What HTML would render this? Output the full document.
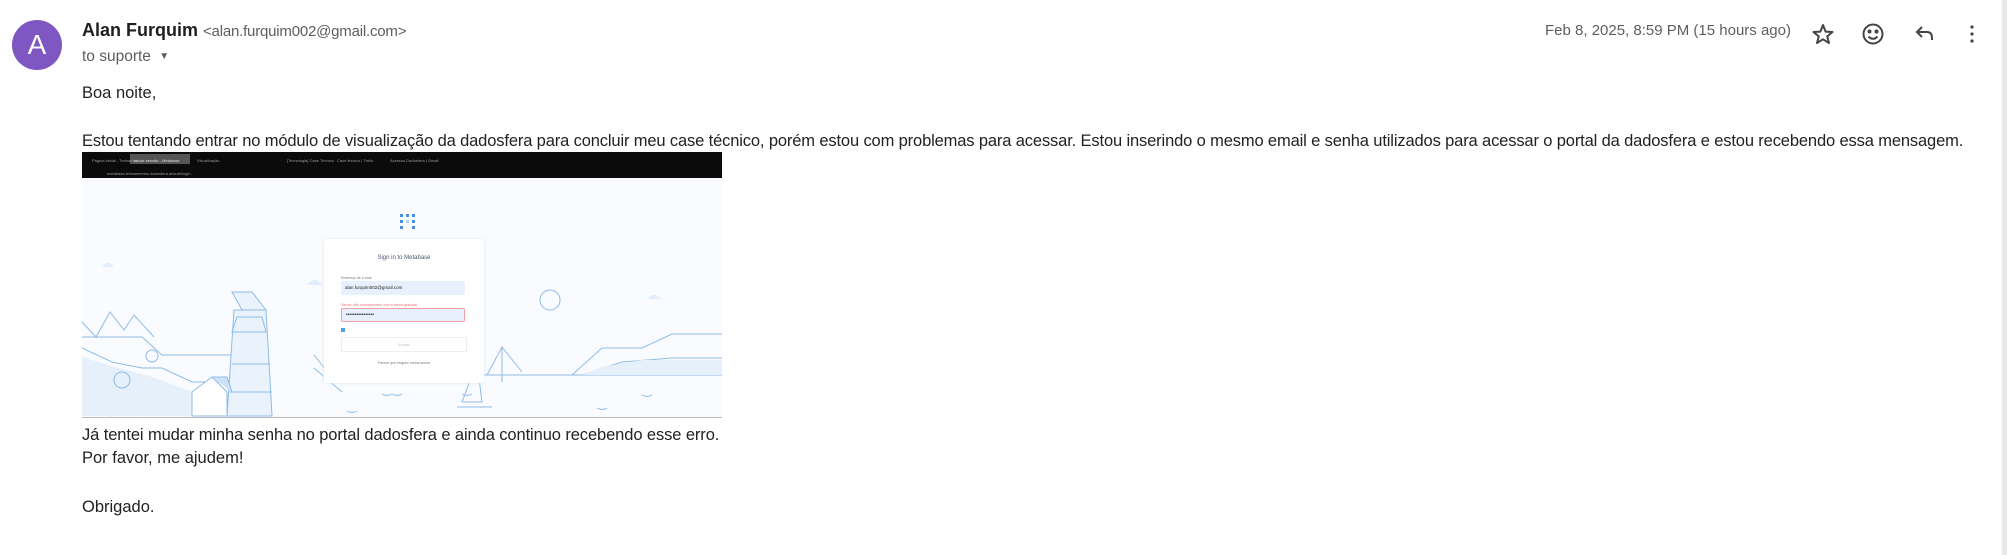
<!DOCTYPE html>
<html><head><meta charset="utf-8"><style>
body{margin:0;width:2007px;height:555px;background:#fff;position:relative;overflow:hidden;font-family:"Liberation Sans",Arial,sans-serif;color:#222}
.a{position:absolute;white-space:nowrap}
.av{left:12px;top:20px;width:50px;height:50px;border-radius:50%;background:#7e57c2;color:#fff;font-size:28px;line-height:50px;text-align:center}
.t{font-size:16.5px;color:#222}
.sb{position:absolute;left:2002px;top:0;width:5px;height:555px;background:#e8e8e8}
</style></head><body>
<div class="a av">A</div>
<div class="a" style="left:82px;top:20px;font-size:18px;font-weight:bold;color:#1f1f1f">Alan Furquim <span style="font-weight:normal;font-size:15px;color:#5e5e5e;letter-spacing:-0.2px">&lt;alan.furquim002@gmail.com&gt;</span></div>
<div class="a" style="left:82px;top:48px;font-size:15.5px;color:#5e5e5e">to suporte <span style="font-size:10px;position:relative;top:-2px;margin-left:4px">▼</span></div>
<div class="a" style="left:1545px;top:22px;font-size:15px;color:#5e5e5e">Feb 8, 2025, 8:59 PM (15 hours ago)</div>
<svg class="a" style="left:1810px;top:20px" width="180" height="30" viewBox="0 0 180 30" fill="none" stroke="#444" stroke-width="2">
<path d="M13 5 L15.6 11.6 L22.5 12 L17.2 16.4 L19 23 L13 19.3 L7 23 L8.8 16.4 L3.5 12 L10.4 11.6 Z" stroke-linejoin="round"/>
<circle cx="63" cy="14" r="9.5"/><circle cx="59.5" cy="11.5" r="1" fill="#444"/><circle cx="66.5" cy="11.5" r="1" fill="#444"/><path d="M58.5 16.5 Q63 21 67.5 16.5"/>
<path d="M107 12 H117 Q122 12 122 18 V20 M112 7 L107 12 L112 17"/>
<circle cx="162" cy="7" r="1.6" fill="#444" stroke="none"/><circle cx="162" cy="14" r="1.6" fill="#444" stroke="none"/><circle cx="162" cy="21" r="1.6" fill="#444" stroke="none"/>
</svg>
<div class="a t" style="left:82px;top:84px">Boa noite,</div>
<div class="a t" style="left:82px;top:132px;letter-spacing:-0.14px">Estou tentando entrar no módulo de visualização da dadosfera para concluir meu case técnico, porém estou com problemas para acessar. Estou inserindo o mesmo email e senha utilizados para acessar o portal da dadosfera e estou recebendo essa mensagem.</div>
<div class="a" style="left:82px;top:152px;width:640px;height:266px;background:#f9fbfe;overflow:hidden">
<div style="position:absolute;left:0;top:0;width:640px;height:26px;background:#0b0b0b"></div>
<div style="position:absolute;left:48px;top:2px;width:60px;height:10px;background:#555"></div>
<svg style="position:absolute;left:0;top:0" width="640" height="266" fill="none" stroke="#8fbbe8" stroke-width="1">
<g fill="#999" stroke="none" font-size="4" font-family="Liberation Sans">
<text x="10" y="10">Página inicial - Treinamen</text><text x="52" y="10" fill="#ddd">Iniciar sessão - Metabase</text><text x="115" y="10">Visualização</text><text x="205" y="10">[Tecnologia] Case Técnico</text><text x="255" y="10">Case técnico | Trello</text><text x="308" y="10">Acessos Dadosfera | Gmail</text><text x="25" y="23">metabase-treinamentos.dadosfera.ai/auth/login</text></g>
<path d="M0 170 L14 185 L28 160 L42 178 L52 163 L72 185 M0 185 L60 185 L80 203 L125 203 L150 203 M0 196 L30 210 L60 216 L80 216 L110 230 L150 230 M0 223 L20 232 L40 240 L60 264 M0 250 L30 264"/>
<path d="M0 205 L30 214 L70 225 L110 240 L150 240 L150 264 L0 264 Z" fill="#e5f0fb" stroke="none"/>
<path d="M150 140 L160 158 L184 158 L170 140 Z M152 158 L184 158 L190 264 L145 264 Z" fill="#eaf3fc"/>
<path d="M155 165 L180 165 L184 180 L150 180 Z M150 212 L188 212 M148 240 L190 240"/>
<path d="M110 240 L130 225 L145 240 L145 264 L110 264 Z" fill="#fff"/>
<path d="M130 225 L145 225 L150 240" fill="#cfe1f4"/>
<path d="M232 203 L244 218 M232 216 L260 240"/>
<path d="M490 223 L520 196 L560 196 L590 182 L640 182 M500 223 L540 210 L590 206 L640 206 M470 223 L640 223" />
<path d="M520 215 L560 208 L640 208 L640 223 L500 223 Z" fill="#e5f0fb" stroke="none"/>
<path d="M405 223 L420 195 L440 220 M400 223 L470 223 M420 195 L420 230"/>
<path d="M380 250 L395 210 L400 250 Z M375 255 L410 255"/>
<circle cx="468" cy="148" r="10"/><circle cx="40" cy="228" r="8"/><circle cx="70" cy="204" r="6"/>
<path d="M20 115 q5-8 12 0 Z M225 133 q8-10 16 0 Z M565 147 q7-8 14 0 Z" fill="#e3eefa" stroke="none"/>
<path d="M300 242 q5 3 10 0 q5 3 10 0 M380 242 q5 3 10 0 M560 243 q5 3 10 0 M265 259 q5 3 10 0 M515 256 q5 3 10 0"/>
<g fill="#4a90e2" stroke="none"><rect x="318" y="62" width="3" height="3"/><rect x="324" y="62" width="3" height="3"/><rect x="330" y="62" width="3" height="3"/><rect x="318" y="68" width="3" height="3"/><rect x="330" y="68" width="3" height="3"/><rect x="324" y="68" width="3" height="3" opacity=".4"/><rect x="318" y="74" width="3" height="3"/><rect x="330" y="74" width="3" height="3"/></g>
</svg>
<div style="position:absolute;left:242px;top:87px;width:160px;height:144px;background:#fff;box-shadow:0 0 3px #dde6f0">
<div style="position:absolute;left:0;width:160px;top:16px;text-align:center;font-size:6px;color:#4c5773">Sign in to Metabase</div>
<div style="position:absolute;left:17px;top:37px;font-size:3.5px;color:#777">Endereço de e-mail</div>
<div style="position:absolute;left:17px;top:42px;width:124px;height:14px;background:#e8f0fe;border-radius:2px;font-size:4.5px;line-height:14px;text-indent:4px">alan.furquim002@gmail.com</div>
<div style="position:absolute;left:17px;top:64px;font-size:3.5px;color:#ed6e6e">Senha: não correspondem com a senha gravada</div>
<div style="position:absolute;left:17px;top:69px;width:122px;height:12px;background:#e8f0fe;border:1px solid #f3a0a0;border-radius:2px;font-size:5px;line-height:12px;text-indent:4px">••••••••••••••••</div>
<div style="position:absolute;left:17px;top:89px;width:4px;height:4px;background:#509ee3"></div>
<div style="position:absolute;left:17px;top:98px;width:124px;height:13px;border:1px solid #eee;font-size:4px;color:#bbb;text-align:center;line-height:13px">Entrar</div>
<div style="position:absolute;left:0;width:160px;top:122px;text-align:center;font-size:3.5px;color:#777">Parece que esqueci minha senha</div>
</div>
<div style="position:absolute;left:0;top:265px;width:640px;height:1px;background:#bbb"></div>
</div>
<div class="a t" style="left:82px;top:426px;letter-spacing:-0.1px">Já tentei mudar minha senha no portal dadosfera e ainda continuo recebendo esse erro.</div>
<div class="a t" style="left:82px;top:449px">Por favor, me ajudem!</div>
<div class="a t" style="left:82px;top:498px">Obrigado.</div>
<div class="sb"></div>
</body></html>
